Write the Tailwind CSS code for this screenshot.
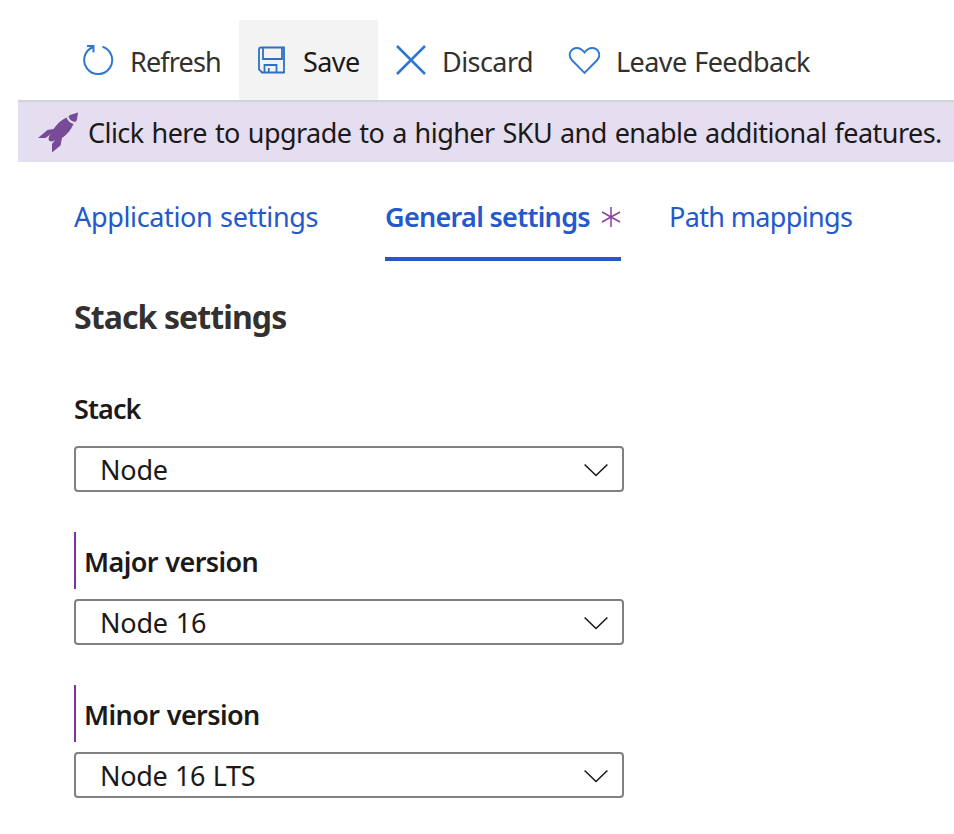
<!DOCTYPE html>
<html lang="en">
<head>
<meta charset="utf-8">
<title>Configuration</title>
<script src="https://cdn.jsdelivr.net/npm/@tailwindcss/browser@4"></script>
</head>
<body class="bg-white w-[954px] h-[834px] overflow-hidden font-['Noto_Sans','Open_Sans',sans-serif] text-[27px] leading-[38px] text-[#1b1a19] whitespace-nowrap">
<header class="ml-[18px] mt-5 h-20 flex text-[#323130]">
  <button class="w-[221px] pl-[65px] flex items-center">
    <svg class="w-8 h-8 shrink-0" viewBox="0 0 32 32" fill="none" stroke="#2f78d0" stroke-width="2"><path d="M19.500 2.800A14 14 0 1 1 10.300 3M4 2H10.500V8.500"/></svg>
    <span class="ml-[15px] pt-[3px] tracking-[-0.85px]">Refresh</span>
  </button>
  <button class="w-[139px] bg-[#f3f3f3] pl-[18px] flex items-center text-[#1b1a19]">
    <svg class="w-[30px] h-[30px] shrink-0" viewBox="0 0 30 30" fill="none" stroke="#2f6fc4" stroke-width="1.8"><path d="M2 4.500Q2 2.500 4 2.500H27V27.500H5L2 24.500ZM6 2.500V14H25V2.500M7.500 27.500V20H19.500V27.500M11.800 27.500V23"/></svg>
    <span class="ml-4 pt-[3px] tracking-[-0.55px]">Save</span>
  </button>
  <button class="pl-[17px] w-[173px] flex items-center">
    <svg class="w-8 h-8 shrink-0" viewBox="0 0 32 32" fill="none" stroke="#2f78d0" stroke-width="2.6"><path d="M2 2 30 30M30 2 2 30"/></svg>
    <span class="ml-[15px] pt-[3px] tracking-[-0.55px]">Discard</span>
  </button>
  <button class="pl-[17px] flex items-center">
    <svg class="w-8 h-8 shrink-0" viewBox="0 0 32 32" fill="none" stroke="#2f78d0" stroke-width="1.9"><path d="M16.500 28.800 4.200 16.500C-1 11 2.800 4 9 4c3.500 0 5.500 2 7.500 4.500C18.500 6 20.500 4 24 4c6.200 0 10 7 4.800 12.500Z"/></svg>
    <span class="ml-4 pt-[3px] tracking-[-0.55px] [word-spacing:1px]">Leave Feedback</span>
  </button>
</header>
<div class="ml-[18px] h-[62px] border-t-2 border-[#d3d3d5] bg-[#e5ddf0] flex items-center pl-5 text-[#1b1a19]">
  <svg class="w-10 h-10 shrink-0" viewBox="0 0 40 40" fill="#774b97"><path d="M40 .5 38.800 8.500 37 10Q32 9 30.500 4.500L32 3ZM28.500 5.500Q30.500 10.500 35.500 12C33 18 29 22.500 24 26L22.500 33.500 14 40.500V32L17.500 27.500Q14 31 11 28.500 9.500 25 13 22L7.500 26H0L9.500 18 15.500 17C19 12 23 8 28.500 5.500Z"/></svg>
  <span class="ml-[10px] pt-0.5 tracking-[-0.55px] [word-spacing:1.4px]">Click here to upgrade to a higher SKU and enable additional features.</span>
</div>
<nav class="h-[99px] flex pl-[74px] pt-[37px] text-[#2458cc]">
  <a class="w-[311px] -mt-px tracking-[-0.35px] [word-spacing:1px]">Application settings</a>
  <a class="w-[236px] h-[62px] border-b-4 border-[#2458cc] font-semibold flex justify-between"><span class="-mt-px tracking-[-0.7px]">General settings</span>
    <svg class="w-5 h-[22px] mt-[7px] shrink-0" viewBox="0 0 20 22" fill="none" stroke="#8b3fa8" stroke-width="1.5"><path d="M10 1V21M1 6 19 16M19 6 1 16"/></svg></a>
  <a class="ml-12 -mt-px tracking-[-0.65px]">Path mappings</a>
</nav>
<main class="pl-[74px]">
  <h1 class="mt-9 h-10 text-[32px] leading-10 font-bold text-[#323130] tracking-[-0.9px]">Stack settings</h1>
  <section class="mt-[42px] h-[153px]">
    <h2 class="h-[57px] pt-[11px] font-semibold tracking-[-0.9px]">Stack</h2>
    <div class="mt-[10px] w-[550px] h-[46px] border-2 border-[#808080] rounded flex items-center pl-6 pr-[14px] pt-0.5 justify-between"><span class="tracking-[-0.2px]">Node</span><svg class="w-6 h-4" viewBox="0 0 24 16" fill="none" stroke="#1b1a19" stroke-width="1.6"><path d="M.6 2.500 12 13.500 23.400 2.500"/></svg></div>
  </section>
  <section class="h-[153px]">
    <h2 class="h-[57px] pt-[11px] pl-2 border-l-2 border-[#8230a5] font-semibold tracking-[-0.6px] [word-spacing:1px]">Major version</h2>
    <div class="mt-[10px] w-[550px] h-[46px] border-2 border-[#808080] rounded flex items-center pl-6 pr-[14px] pt-0.5 justify-between"><span class="tracking-[-0.2px] [word-spacing:1px]">Node 16</span><svg class="w-6 h-4" viewBox="0 0 24 16" fill="none" stroke="#1b1a19" stroke-width="1.6"><path d="M.6 2.500 12 13.500 23.400 2.500"/></svg></div>
  </section>
  <section class="h-[153px]">
    <h2 class="h-[57px] pt-[11px] pl-2 border-l-2 border-[#8230a5] font-semibold tracking-[-0.6px] [word-spacing:1px]">Minor version</h2>
    <div class="mt-[10px] w-[550px] h-[46px] border-2 border-[#808080] rounded flex items-center pl-6 pr-[14px] pt-0.5 justify-between"><span class="tracking-[-0.35px] [word-spacing:1px]">Node 16 LTS</span><svg class="w-6 h-4" viewBox="0 0 24 16" fill="none" stroke="#1b1a19" stroke-width="1.6"><path d="M.6 2.500 12 13.500 23.400 2.500"/></svg></div>
  </section>
</main>
</body>
</html>
